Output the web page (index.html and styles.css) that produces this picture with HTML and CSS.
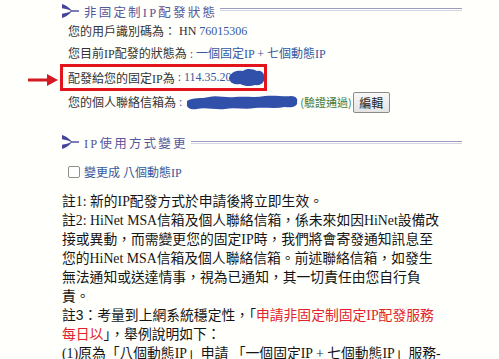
FILE: index.html
```html
<!DOCTYPE html>
<html lang="zh-Hant">
<head>
<meta charset="utf-8">
<title>IP配發狀態</title>
<link rel="stylesheet" href="styles.css">
</head>
<body>
<div class="page">
  <div class="sec-head">
    <svg class="sec-icon" viewBox="0 0 17 14" width="17" height="14"><path d="M0 0 Q5.5 1.5 10 7 Q5 4.8 0 4.2 Z"/><path d="M0 14 Q5.5 12.5 10 7 Q5 9.2 0 9.8 Z"/><rect x="8.5" y="6.3" width="8.5" height="1.4"/></svg>
    <span class="sec-title">非固定制IP配發狀態</span>
    <span class="sec-line"></span>
  </div>
  <div class="row">您的用戶識別碼為：<span class="dark">&nbsp;HN</span>&nbsp;<span class="val">76015306</span></div>
  <div class="row">您目前IP配發的狀態為<span class="val">&nbsp;:&nbsp;一個固定IP + 七個動態IP</span></div>
  <div class="row row-mark">
    <svg class="mark-arrow" viewBox="0 0 30 12" width="30" height="12"><rect x="0" y="4.5" width="21" height="3"/><path d="M19 0 L30 6 L19 12 Z"/></svg>
    配發給您的固定IP為<span class="val">&nbsp;:&nbsp;114.35.20</span>
    <svg class="blob blob-ip" viewBox="0 0 38 21" width="38" height="21"><path d="M2 9 C4 4 10 3 15 4 C19 1 25 2 29 4 C34 3 37 7 36 11 C37 15 33 19 27 18 C22 20 16 19 12 17 C7 18 2 16 2 13 C0 12 1 10 2 9 Z"/></svg>
  </div>
  <div class="row">您的個人聯絡信箱為<span class="val">&nbsp;:&nbsp;</span>
    <svg class="blob blob-mail" viewBox="0 0 114 17" width="114" height="17"><path d="M2 7 C8 3 16 5 24 3 C32 1 40 4 50 3 C60 2 70 4 80 2 C90 1 100 3 106 2 C111 2 113 5 112 8 C113 12 108 14 100 13 C90 15 80 13 70 14 C60 16 50 13 40 15 C30 16 20 13 12 15 C6 16 1 14 2 10 Z"/></svg>
    <span class="ok">(驗證通過)</span><button class="btn" type="button">編輯</button>
  </div>
  <div class="sec-head sec-head-2">
    <svg class="sec-icon" viewBox="0 0 17 14" width="17" height="14"><path d="M0 0 Q5.5 1.5 10 7 Q5 4.8 0 4.2 Z"/><path d="M0 14 Q5.5 12.5 10 7 Q5 9.2 0 9.8 Z"/><rect x="8.5" y="6.3" width="8.5" height="1.4"/></svg>
    <span class="sec-title">IP使用方式變更</span>
    <span class="sec-line"></span>
  </div>
  <label class="row check-row"><input class="check" type="checkbox"><span class="val">變更成 八個動態IP</span></label>
  <div class="notes">
    註1: 新的IP配發方式於申請後將立即生效。<br>
    註2: HiNet MSA信箱及個人聯絡信箱，係未來如因HiNet設備改<br>
    接或異動，而需變更您的固定IP時，我們將會寄發通知訊息至<br>
    您的HiNet MSA信箱及個人聯絡信箱。前述聯絡信箱，如發生<br>
    無法通知或送達情事，視為已通知，其一切責任由您自行負<br>
    責。<br>
    註<span class="sans">3</span>：考量到上網系統穩定性，「<span class="red">申請非固定制固定IP配發服務</span><br>
    <span class="red">每日以</span>」，舉例說明如下：<br>
    (1)原為「八個動態IP」申請 「一個固定IP + 七個動態IP」服務-
  </div>
</div>
</body>
</html>
```
FILE: styles.css
```css
html, body {
  margin: 0;
  padding: 0;
  background: #fffffb;
}
body {
  font-family: "Liberation Serif", "Noto Sans CJK TC", serif;
  color: #333;
  overflow: hidden;
}
.page {
  width: 402px;
  padding-left: 60px;
  padding-top: 2px;
}
.sec-head {
  display: flex;
  align-items: center;
  height: 18px;
  margin-left: 2px;
}
.sec-head-2 {
  margin-top: 20px;
}
.sec-icon {
  flex: none;
  fill: #45459c;
}
.sec-title {
  margin-left: 5px;
  font-family: "Liberation Serif", "Noto Sans CJK TC", serif;
  font-size: 12.5px;
  letter-spacing: 2.2px;
  color: #56569a;
  white-space: nowrap;
}
.sec-line {
  flex: 1;
  height: 1px;
  margin-left: 3px;
  border-top: 1px solid #9c9cc0;
  border-bottom: 1px solid #d4d4e4;
}
.sec-head:first-child .sec-line {
  margin-top: -3px;
}
.row {
  display: flex;
  align-items: center;
  height: 22px;
  padding-left: 8px;
  font-size: 12px;
  white-space: nowrap;
}
.val {
  color: #35589f;
}
.dark {
  color: #2a2a3a;
}
.row-mark {
  position: relative;
  box-sizing: border-box;
  width: 207px;
  height: 27px;
  padding-left: 5px;
  border: 3px solid #e3141c;
}
.mark-arrow {
  position: absolute;
  left: -35px;
  top: 7px;
  fill: #d41a22;
}
.blob {
  flex: none;
  fill: #3050aa;
  filter: blur(0.5px);
}
.blob-ip {
  margin-left: -4px;
}
.ok {
  margin-left: 1px;
  font-size: 11px;
  color: #3b7a3b;
  font-family: "Noto Sans CJK TC", sans-serif;
}
.btn {
  height: 21px;
  width: 37px;
  margin-left: 1px;
  padding: 0;
  font-family: "Noto Sans CJK TC", sans-serif;
  font-size: 12px;
  color: #222;
  background: linear-gradient(#f8f8f8, #e4e4e4);
  border: 1px solid #8a8a8a;
  border-radius: 2px;
}
.check-row {
  margin-top: 10px;
}
.check {
  appearance: none;
  -webkit-appearance: none;
  width: 12px;
  height: 12px;
  margin: 0 4px 0 0;
  border: 1px solid #8f8f8f;
  border-radius: 2px;
  background: #fff;
}
.notes {
  margin-top: 9px;
  margin-left: 2px;
  font-size: 13.8px;
  line-height: 19px;
  color: #151515;
  white-space: nowrap;
}
.sans {
  font-family: "Liberation Sans", sans-serif;
}
.red {
  color: #e2232b;
}
```
